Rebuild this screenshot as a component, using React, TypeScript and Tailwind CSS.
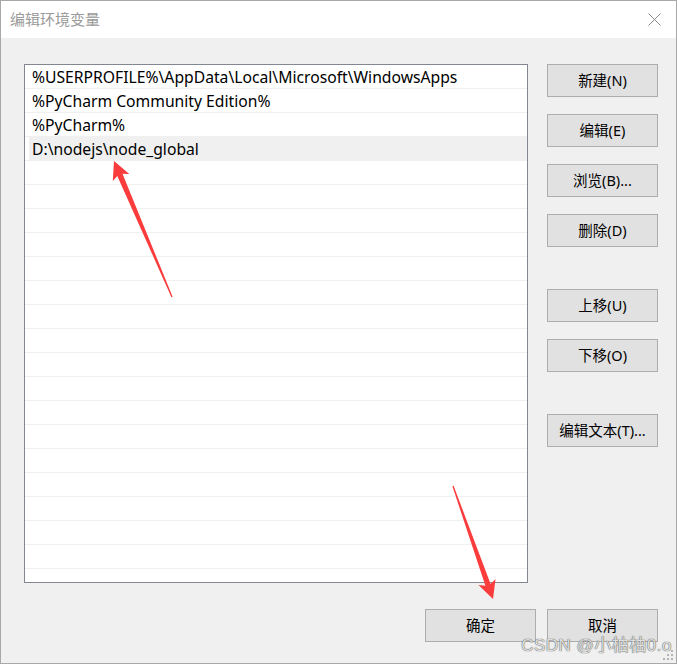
import React from "react";

const PATHS = [
  "%USERPROFILE%\\AppData\\Local\\Microsoft\\WindowsApps",
  "%PyCharm Community Edition%",
  "%PyCharm%",
  "D:\\nodejs\\node_global",
];

const SIDE_BUTTONS = [
  { label: "新建(N)", gap: "mt-0" },
  { label: "编辑(E)", gap: "mt-[17px]" },
  { label: "浏览(B)...", gap: "mt-[17px]" },
  { label: "删除(D)", gap: "mt-[17px]" },
  { label: "上移(U)", gap: "mt-[42px]" },
  { label: "下移(O)", gap: "mt-[17px]" },
  { label: "编辑文本(T)...", gap: "mt-[42px]" },
];

type Pt = [number, number];

// tapered annotation arrow, tail is a thin point, head is a notched triangle
function arrowPoints(tail: Pt, tip: Pt, headLen: number, headHalf: number, shaftHalf: number) {
  const dx = tip[0] - tail[0];
  const dy = tip[1] - tail[1];
  const len = Math.hypot(dx, dy);
  const ux = dx / len;
  const uy = dy / len;
  const nx = -uy;
  const ny = ux;
  const bx = tip[0] - ux * headLen;
  const by = tip[1] - uy * headLen;
  const nbx = tip[0] - ux * (headLen - 3);
  const nby = tip[1] - uy * (headLen - 3);
  const pts: Pt[] = [
    tip,
    [bx + nx * headHalf, by + ny * headHalf],
    [nbx + nx * shaftHalf, nby + ny * shaftHalf],
    [tail[0] + nx * 0.6, tail[1] + ny * 0.6],
    [tail[0] - nx * 0.6, tail[1] - ny * 0.6],
    [nbx - nx * shaftHalf, nby - ny * shaftHalf],
    [bx - nx * headHalf, by - ny * headHalf],
  ];
  return pts.map((p) => `${p[0].toFixed(1)},${p[1].toFixed(1)}`).join(" ");
}

function WinButton({ label, className = "" }: { label: string; className?: string }) {
  return (
    <button
      type="button"
      className={`flex h-[33px] w-[111px] items-center justify-center border border-[#adadad] bg-[#e1e1e1] text-[14.5px] text-black ${className}`}
    >
      {label}
    </button>
  );
}

export default function App() {
  const rows = Array.from({ length: 22 }, (_, i) => PATHS[i] ?? "");

  return (
    <div
      className="relative h-[664px] w-[677px] overflow-hidden border border-[#a8a8a8] bg-[#f0f0f0]"
      style={{ fontFamily: '"Noto Sans", "Noto Sans CJK SC", sans-serif' }}
    >
      {/* Title bar */}
      <div className="flex h-[37px] items-center justify-between bg-white pl-[9px] pr-[15px]">
        <span className="text-[15px] text-[#9a9a9a]" style={{ fontFamily: '"Noto Sans CJK SC", sans-serif' }}>
          编辑环境变量
        </span>
        <svg width="13" height="13" viewBox="0 0 13 13" aria-hidden="true">
          <path d="M0.5 0.5 L12.5 12.5 M12.5 0.5 L0.5 12.5" stroke="#8a8a8a" strokeWidth="1" fill="none" />
        </svg>
      </div>

      {/* Body */}
      <div className="flex flex-col pl-[23px] pr-[18px] pt-[26px]">
        <div className="flex items-start">
          {/* Path list */}
          <div className="h-[519px] w-[504px] overflow-hidden border border-[#828790] bg-white">
            {rows.map((text, i) => (
              <div key={i} className="flex h-[24px] border-b border-[#f0f0f0] pl-[4px]">
                <div
                  className={`flex flex-1 items-center pl-[3px] pt-[3px] text-[15.7px] leading-none text-black ${
                    i === 3 ? "bg-[#f0f0f0]" : ""
                  }`}
                >
                  {text}
                </div>
              </div>
            ))}
          </div>

          {/* Side buttons */}
          <div className="ml-[19px] flex flex-col">
            {SIDE_BUTTONS.map((b) => (
              <WinButton key={b.label} label={b.label} className={b.gap} />
            ))}
          </div>
        </div>

        {/* OK / Cancel */}
        <div className="mt-[26px] flex justify-end gap-[11px]">
          <WinButton label="确定" />
          <WinButton label="取消" />
        </div>
      </div>

      {/* Watermark */}
      <div
        className="absolute bottom-[9px] right-[4px] text-[17px] leading-none tracking-[0.5px] text-[#dedede] [text-shadow:0_0_1px_#555,0_0_1px_#777]"
        style={{ fontFamily: '"Liberation Sans", "Noto Sans CJK SC", sans-serif' }}
      >
        CSDN @小柚柚0.o
      </div>

      {/* Resize grip */}
      <svg className="absolute bottom-[2px] right-[2px]" width="12" height="12" viewBox="0 0 12 12" aria-hidden="true">
        {[
          [9, 1], [9, 5], [5, 5], [9, 9], [5, 9], [1, 9],
        ].map(([x, y]) => (
          <rect key={`${x}-${y}`} x={x} y={y} width="2" height="2" fill="#b4b4b4" />
        ))}
      </svg>

      {/* Red annotation arrows */}
      <svg className="pointer-events-none absolute left-[-1px] top-[-1px]" width="677" height="664" aria-hidden="true">
        <polygon points={arrowPoints([172, 297], [114, 161], 18, 9, 2.8)} fill="#fa3c3c" />
        <polygon points={arrowPoints([453, 486], [493, 599], 18, 9, 2.8)} fill="#fa3c3c" />
      </svg>
    </div>
  );
}
